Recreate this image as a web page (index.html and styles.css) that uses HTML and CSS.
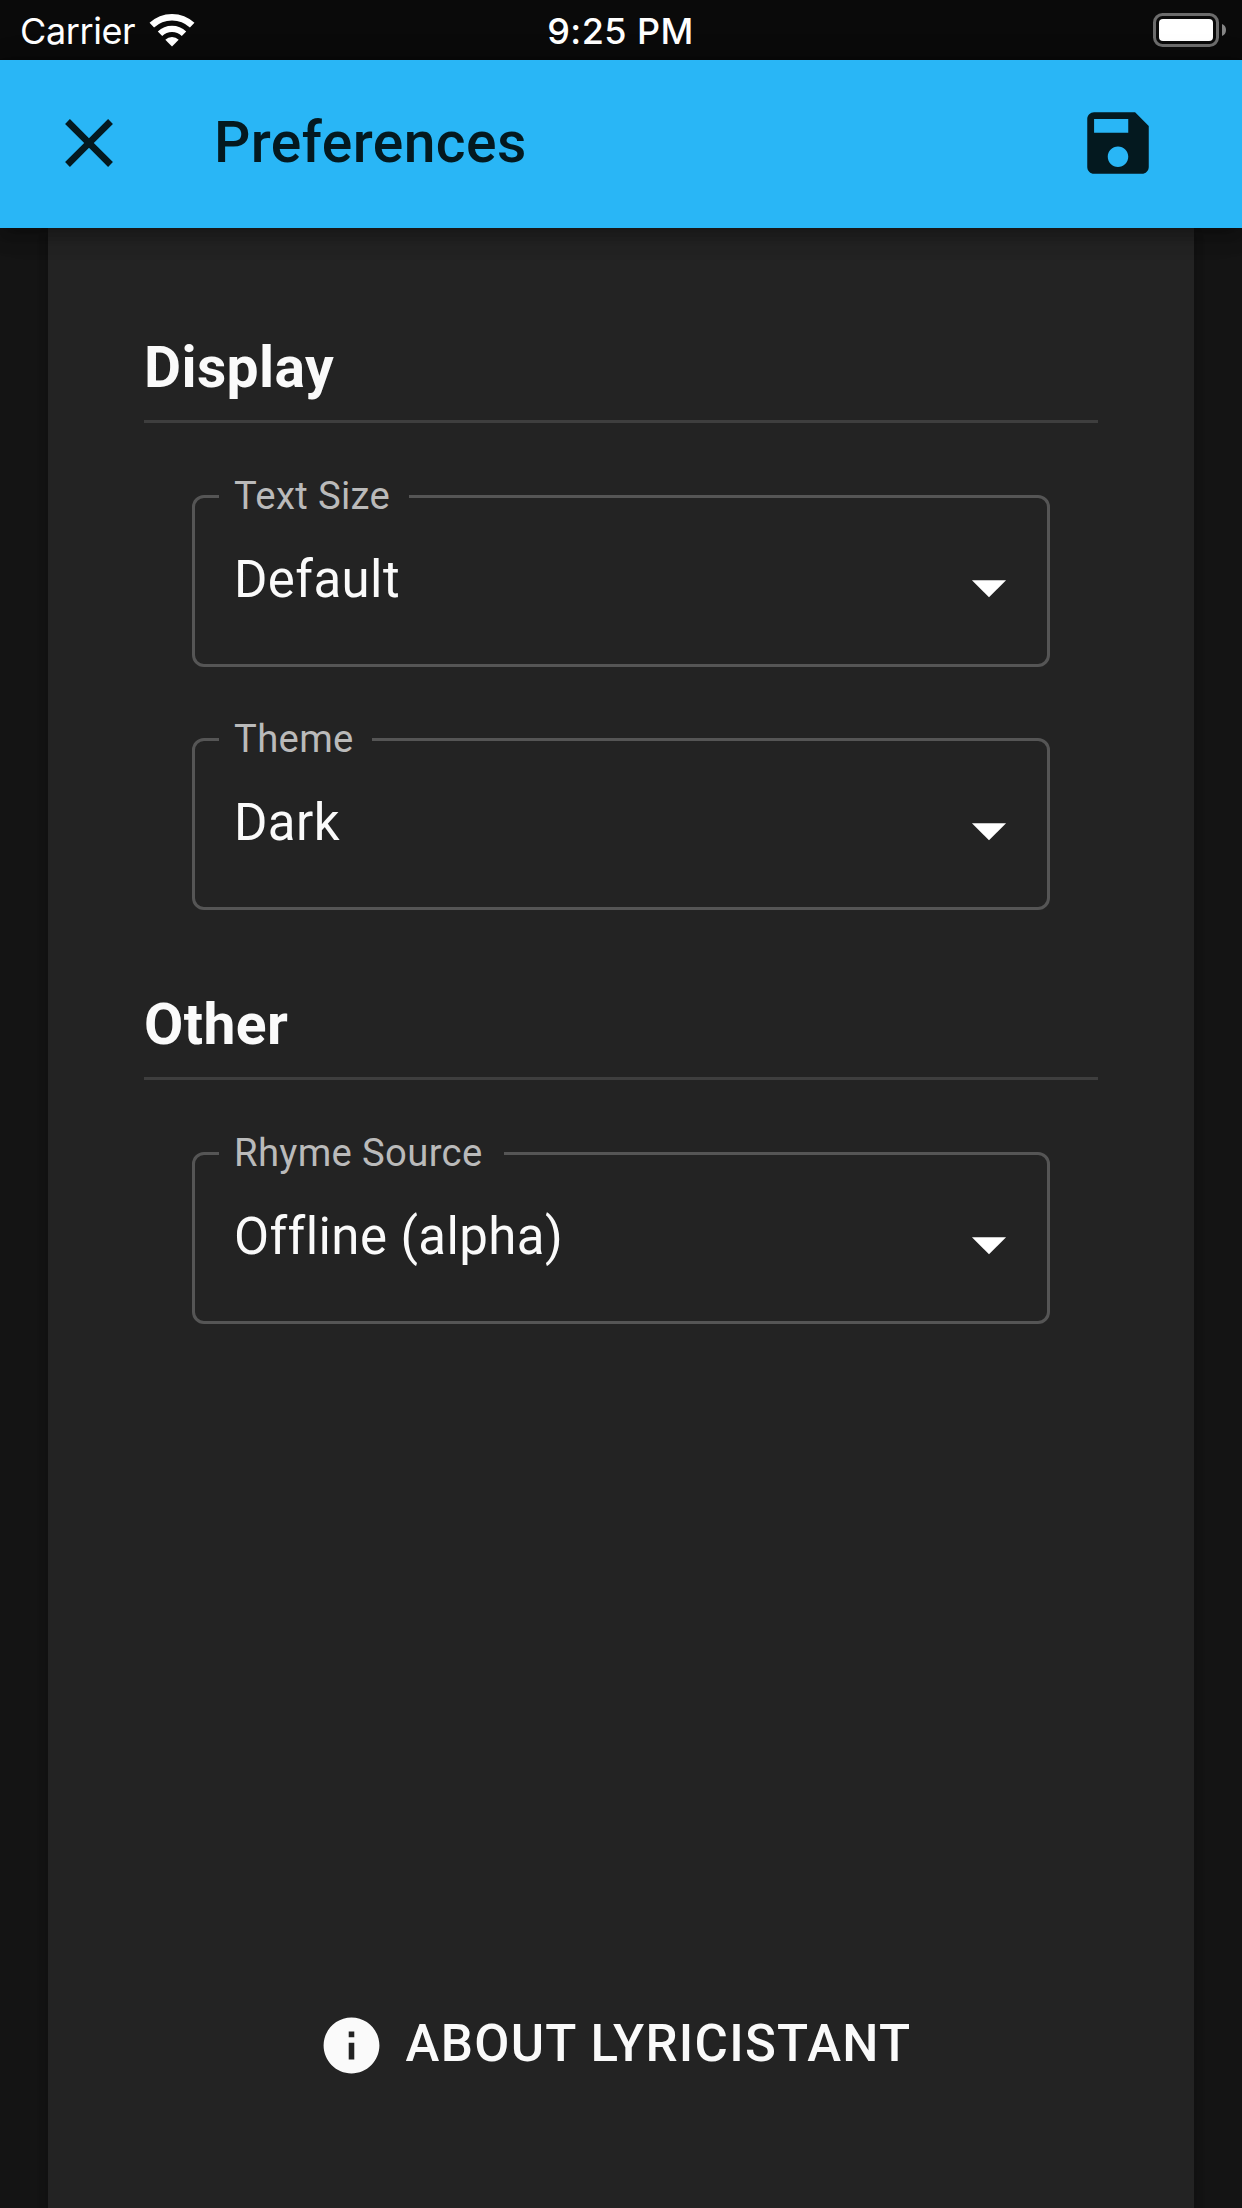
FILE: index.html
```html
<!DOCTYPE html>
<html lang="en">
<head>
<meta charset="utf-8">
<title>Preferences</title>
<link rel="stylesheet" href="styles.css">
</head>
<body>
<div class="status-bar">
  <div class="status-left">
    <span class="carrier">Carrier</span>
    <svg class="wifi" viewBox="0 0 46 34" fill="none" stroke="#fff">
      <path d="M2.8 12.2A29.5 29.5 0 0 1 43.2 12.2" stroke-width="6.6"/>
      <path d="M11 20.7A17.4 17.4 0 0 1 35 20.7" stroke-width="6.4"/>
      <path d="M16.3 26.7A9.6 9.6 0 0 1 29.7 26.7L23 33.4Z" fill="#fff" stroke="none"/>
    </svg>
  </div>
  <time class="clock">9:25 PM</time>
  <div class="status-right">
    <svg class="battery" viewBox="0 0 74 34">
      <rect x="1.5" y="1.5" width="63" height="31" rx="8" fill="none" stroke="#6c6c6c" stroke-width="3"/>
      <rect x="6" y="6" width="54" height="22" rx="4" fill="#fff"/>
      <path d="M69 11v12c2.600-1 4-3.300 4-6s-1.400-5-4-6z" fill="#858585"/>
    </svg>
  </div>
</div>
<header class="app-bar">
  <svg class="icon" viewBox="0 0 24 24"><path d="M19 6.410 17.590 5 12 10.590 6.410 5 5 6.410 10.590 12 5 17.590 6.410 19 12 13.410 17.590 19 19 17.590 13.410 12z"/></svg>
  <h1 class="title">Preferences</h1>
  <svg class="icon" viewBox="0 0 24 24"><path d="M17 3H5c-1.110 0-2 .9-2 2v14c0 1.100.89 2 2 2h14c1.100 0 2-.9 2-2V7l-4-4zm-5 16c-1.660 0-3-1.340-3-3s1.340-3 3-3 3 1.340 3 3-1.340 3-3 3zm3-10H5V5h10v4z"/></svg>
</header>
<main class="panel">
  <section class="group">
    <h2 class="heading">Display</h2>
    <div class="fields">
      <div class="field">
        <span class="label label-size">Text Size</span>
        <span class="value">Default</span>
        <svg class="arrow" viewBox="0 0 24 24"><path d="M7 10l5 5 5-5z"/></svg>
      </div>
      <div class="field">
        <span class="label label-theme">Theme</span>
        <span class="value">Dark</span>
        <svg class="arrow" viewBox="0 0 24 24"><path d="M7 10l5 5 5-5z"/></svg>
      </div>
    </div>
  </section>
  <section class="group">
    <h2 class="heading">Other</h2>
    <div class="fields">
      <div class="field">
        <span class="label label-rhyme">Rhyme Source</span>
        <span class="value">Offline (alpha)</span>
        <svg class="arrow" viewBox="0 0 24 24"><path d="M7 10l5 5 5-5z"/></svg>
      </div>
    </div>
  </section>
  <div class="about">
    <svg class="info" viewBox="0 0 24 24"><path d="M12 2C6.480 2 2 6.480 2 12s4.480 10 10 10 10-4.480 10-10S17.520 2 12 2zm1 15h-2v-6h2v6zm0-8h-2V7h2v2z"/></svg>
    <span class="about-text">ABOUT LYRICISTANT</span>
  </div>
</main>
</body>
</html>
```
FILE: styles.css
```css
* { box-sizing: border-box; }

body {
  margin: 0;
  height: 2208px;
  display: flex;
  flex-direction: column;
  overflow: hidden;
  background: #141414;
  color: #fafafa;
  font-family: Roboto, sans-serif;
}

svg { display: block; flex: none; }

.status-bar {
  height: 60px;
  flex: none;
  display: grid;
  grid-template-columns: 1fr auto 1fr;
  padding: 0 15px 0 20px;
  background: #0a0a0a;
  color: #fff;
  font: 400 36px/62px Inter, sans-serif;
}
.status-left { display: flex; align-items: flex-start; }
.carrier { width: 129px; letter-spacing: -0.4px; }
.wifi { width: 46px; height: 34px; margin-top: 13px; }
.clock { font-weight: 500; letter-spacing: 0.4px; margin: 0 1px 0 -5px; }
.status-right { display: flex; justify-content: flex-end; }
.battery { width: 74px; height: 34px; margin-top: 13px; }

.app-bar {
  position: relative;
  z-index: 1;
  height: 168px;
  flex: none;
  display: flex;
  align-items: center;
  padding: 0 83px 2px 48px;
  background: #29b6f6;
  color: #04191f;
  box-shadow: 0 6px 12px -3px rgba(0,0,0,.2), 0 12px 15px rgba(0,0,0,.14), 0 3px 30px rgba(0,0,0,.12);
}
.icon { width: 82px; height: 82px; fill: currentColor; }
.title {
  flex: 1;
  margin: 0 0 0 84px;
  font-size: 57px;
  line-height: 84px;
  font-weight: 500;
  letter-spacing: 0.43px;
}

.panel {
  flex: 1;
  margin: 0 48px;
  padding: 105px 96px 0;
  display: flex;
  flex-direction: column;
  background: #232323;
  box-shadow: 0 3px 9px rgba(0,0,0,.2), 0 6px 12px rgba(0,0,0,.1);
}
.group + .group { margin-top: 80px; }
.heading {
  margin: 0;
  padding-bottom: 18px;
  border-bottom: 3px solid #3e3e3e;
  font-size: 57px;
  line-height: 69px;
  font-weight: 700;
  letter-spacing: 0.4px;
}
.fields {
  display: flex;
  flex-direction: column;
  gap: 71px;
  padding: 72px 48px 0;
}
.field {
  position: relative;
  height: 172px;
  display: flex;
  justify-content: space-between;
  padding: 48px 17px 0 39px;
  border: 3px solid #555;
  border-radius: 12px;
}
.label {
  position: absolute;
  left: 24px;
  top: -25px;
  padding-left: 15px;
  background: #232323;
  color: #bababa;
  font-size: 38.25px;
  line-height: 46px;
  letter-spacing: 0.33px;
  white-space: nowrap;
}
.label-size { width: 190px; }
.label-theme { width: 153px; }
.label-rhyme { width: 285px; }
.value { font-size: 51px; line-height: 68px; letter-spacing: 0.4px; }
.arrow { width: 82px; height: 82px; fill: #fff; }

.about {
  margin-top: auto;
  padding-bottom: 129px;
  display: flex;
  align-items: center;
  justify-content: center;
}
.info { width: 67px; height: 67px; margin: 3px 21px 0 -13px; fill: currentColor; }
.about-text {
  font-size: 51px;
  line-height: 68px;
  font-weight: 500;
  letter-spacing: 1.3px;
}
```
